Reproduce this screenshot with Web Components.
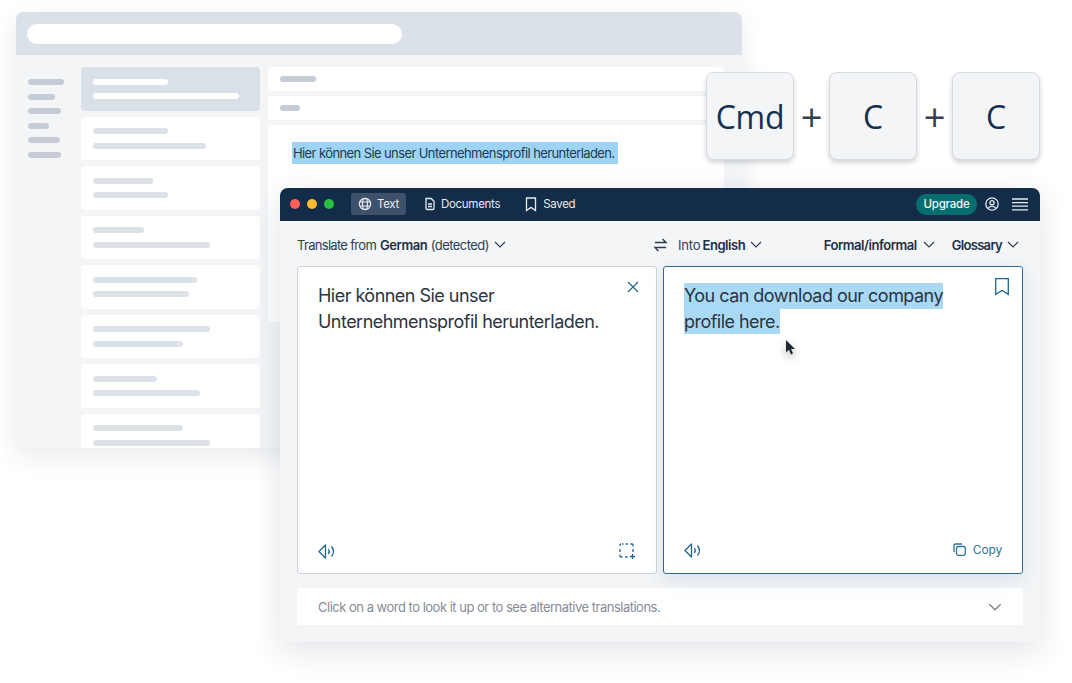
<!DOCTYPE html>
<html lang="en">
<head>
<meta charset="utf-8">
<title>Translator</title>
<style>
    html, body { margin: 0; background: #fff; }
    body { font-family: Inter, "Liberation Sans", sans-serif; overflow: hidden; }
</style>
</head>
<body>
<app-stage>
    <back-window></back-window>
    <translator-window></translator-window>
    <key-combo></key-combo>
</app-stage>

<script>
const ICONS = {
    globe: '<circle cx="7" cy="7" r="5.6"/><ellipse cx="7" cy="7" rx="2.5" ry="5.6"/><path d="M1.6 5h10.8M1.6 9h10.8"/>',
    doc: '<path d="M3 1.5h5.2L11 4.3v7a1.2 1.2 0 0 1-1.2 1.2H4.2A1.2 1.2 0 0 1 3 11.3z"/><path d="M5 7h4M5 9.5h4"/>',
    bookmark: '<path d="M2.5 1h9v12.5L7 10.4l-4.5 3.1z"/>',
    bookmarkLg: '<path d="M.7.7h12.6v15.6L7 12.5.7 16.3z"/>',
    user: '<circle cx="7" cy="7" r="6.2"/><circle cx="7" cy="5.8" r="2.1"/><path d="M3.2 11.4c.9-1.5 2.2-2.3 3.8-2.3s2.9.8 3.8 2.3"/>',
    menu: '<path d="M0 1h16M0 4.6h16M0 8.2h16M0 11.8h16"/>',
    chevron: '<path d="M1 1l5 5 5-5"/>',
    swap: '<path d="M1 4.5h11L8.6 1M12 9.5H1l3.4 3.5"/>',
    close: '<path d="M1 1l10 10M11 1L1 11"/>',
    speaker: '<path d="M1 7.5L7.5 1v13z" stroke-linejoin="round"/><path d="M10.5 5c1 1.6 1 3.4 0 5M13.5 2.5c2.4 3 2.4 7 0 10"/>',
    select: '<path d="M3 1h1.5M7 1h2M11.5 1H13a1 1 0 0 1 1 1v1.5M14 6v3M1 3V2a1 1 0 0 1 1-1M1 6v3M1 11.5V13a1 1 0 0 0 1 1h1.5M6 14h2.5" /><path d="M13.5 11v5M11 13.5h5"/>',
    copy: '<rect x="3.5" y="3.5" width="8.8" height="8.8" rx="1.8"/><path d="M1 9V2.4A1.4 1.4 0 0 1 2.4 1H9"/>'
};

// small svg icon, stroke colour comes from css color
class UiIcon extends HTMLElement {
    connectedCallback() {
        const box = this.getAttribute('box') || '0 0 14 14';
        const [, , vw, vh] = box.split(' ');
        const w = this.getAttribute('w') || vw;
        const h = this.getAttribute('h') || vh;
        const sw = this.getAttribute('sw') || '1.2';
        this.attachShadow({ mode: 'open' }).innerHTML = `
        <style>
            :host { display: block; width: ${w}px; height: ${h}px; flex: none; }
            svg { display: block; overflow: visible; }
        </style>
        <svg width="${w}" height="${h}" viewBox="${box}" fill="none" stroke="currentColor" stroke-width="${sw}">${ICONS[this.getAttribute('name')]}</svg>`;
    }
}
customElements.define('ui-icon', UiIcon);

class AppStage extends HTMLElement {
    constructor() {
        super();
        this.attachShadow({ mode: 'open' }).innerHTML = `
        <style>
            :host { display: block; position: relative; width: 1072px; height: 683px; background: #fff; overflow: hidden; }
        </style>
        <slot></slot>`;
    }
}
customElements.define('app-stage', AppStage);

class SkeletonLine extends HTMLElement {
    constructor() {
        super();
        this.attachShadow({ mode: 'open' }).innerHTML = `
        <style>
            :host { display: block; height: 6px; border-radius: 3px; background: var(--line, #dde1e8); }
        </style>`;
    }
    connectedCallback() {
        this.style.width = this.getAttribute('w') + 'px';
    }
}
customElements.define('skeleton-line', SkeletonLine);

class ListCard extends HTMLElement {
    connectedCallback() {
        this.attachShadow({ mode: 'open' }).innerHTML = `
        <style>
            :host { display: flex; flex-direction: column; gap: 8.5px; flex: none; box-sizing: border-box; height: 43.5px;
                    padding: 11.5px 12px; border-radius: 4px; background: #fff; }
            :host([selected]) { background: #dae0e8; --line: #fff; }
        </style>
        <skeleton-line w="${this.getAttribute('a')}"></skeleton-line>
        <skeleton-line w="${this.getAttribute('b')}"></skeleton-line>`;
    }
}
customElements.define('list-card', ListCard);

class BackWindow extends HTMLElement {
    constructor() {
        super();
        const cards = [[75, 146], [75, 113], [60, 75], [50.6, 117], [104, 95.6], [117, 90], [63.6, 107], [90, 117]];
        this.attachShadow({ mode: 'open' }).innerHTML = `
        <style>
            :host { display: flex; flex-direction: column; position: absolute; left: 16px; top: 12px; width: 726px; height: 436px;
                    border-radius: 8px 8px 0 8px; overflow: hidden; background: #f3f5f7; box-shadow: 0 8px 24px rgba(30,50,80,.10); }
            header { flex: none; height: 43px; box-sizing: border-box; padding: 11.5px 11px; background: #dae1e8; }
            .search { width: 375px; height: 20.5px; border-radius: 10px; background: #fff; }
            .body { flex: 1; min-height: 0; display: flex; padding-top: 12px; }
            nav { flex: none; width: 65px; box-sizing: border-box; padding: 12px 0 0 12px; display: flex; flex-direction: column; gap: 8.6px; --line: #c5ccd5; }
            .list { flex: none; width: 179px; display: flex; flex-direction: column; gap: 6px; }
            .content { flex: none; width: 456px; margin-left: 8px; display: flex; flex-direction: column; gap: 5.5px; }
            .bar { height: 23.5px; box-sizing: border-box; padding: 9px 12px; border-radius: 4px; background: #fff; --line: #c5ccd5; }
            .doc { height: 197px; box-sizing: border-box; padding: 17px 24px; border-radius: 4px; background: #fff; }
            mark { display: inline-block; height: 22px; padding: 0 3px 0 1px; background: #9dd4f5; color: #24394f;
                   font: 13px/22px Inter, "Liberation Sans", sans-serif; letter-spacing: -.6px; white-space: nowrap; }
        </style>
        <header><div class="search"></div></header>
        <div class="body">
            <nav>
                <skeleton-line w="36"></skeleton-line><skeleton-line w="27"></skeleton-line>
                <skeleton-line w="33"></skeleton-line><skeleton-line w="21"></skeleton-line>
                <skeleton-line w="32"></skeleton-line><skeleton-line w="33"></skeleton-line>
            </nav>
            <div class="list">
                ${cards.map((c, i) => `<list-card a="${c[0]}" b="${c[1]}"${i === 0 ? ' selected' : ''}></list-card>`).join('')}
            </div>
            <div class="content">
                <div class="bar"><skeleton-line w="36"></skeleton-line></div>
                <div class="bar"><skeleton-line w="20"></skeleton-line></div>
                <div class="doc"><mark>Hier können Sie unser Unternehmensprofil herunterladen.</mark></div>
            </div>
        </div>`;
    }
}
customElements.define('back-window', BackWindow);

class TitleBar extends HTMLElement {
    constructor() {
        super();
        this.attachShadow({ mode: 'open' }).innerHTML = `
        <style>
            :host { display: flex; align-items: center; flex: none; height: 32.5px; box-sizing: border-box; padding: 0 12px 0 10px;
                    background: #122c4a; color: #e6ebf0; font-size: 11.5px; letter-spacing: -.3px; }
            .dots { display: flex; gap: 7px; margin-right: 17px; }
            .dots i { display: block; width: 10px; height: 10px; border-radius: 50%; }
            .tab { display: flex; align-items: center; gap: 5px; height: 22px; box-sizing: border-box; padding: 0 8px; border-radius: 3px; }
            .tab.on { background: #3e516a; width: 55px; padding: 0 7px; }
            .docs { margin-left: 9px; gap: 4px; }
            .saved { margin-left: 8px; }
            .upgrade { margin-left: auto; width: 61px; height: 21px; border-radius: 10px; background: #066e6f; color: #eef6f5;
                       font-weight: 500; letter-spacing: -.2px; display: flex; align-items: center; justify-content: center; }
            .user { margin: 0 13px 0 8px; }
        </style>
        <div class="dots"><i style="background:#ff5f57"></i><i style="background:#febb2e"></i><i style="background:#29c13f"></i></div>
        <div class="tab on"><ui-icon name="globe"></ui-icon>Text</div>
        <div class="tab docs"><ui-icon name="doc" sw="1.3"></ui-icon>Documents</div>
        <div class="tab saved"><ui-icon name="bookmark" sw="1.3"></ui-icon>Saved</div>
        <div class="upgrade">Upgrade</div>
        <ui-icon class="user" name="user" box="0 0 14 14" sw="1.3"></ui-icon>
        <ui-icon name="menu" box="0 0 16 13" sw="1.3"></ui-icon>`;
    }
}
customElements.define('title-bar', TitleBar);

class LangBar extends HTMLElement {
    constructor() {
        super();
        this.attachShadow({ mode: 'open' }).innerHTML = `
        <style>
            :host { display: flex; align-items: center; height: 45.5px; padding-top: 2.5px; box-sizing: border-box; flex: none; color: #2c3e52; font-size: 13px; letter-spacing: -.55px; white-space: nowrap; }
            b { font-weight: 600; color: #1c2f45; letter-spacing: -.45px; }
            .group { display: flex; align-items: center; }
            ui-icon { margin-left: 5px; color: #2c3e52; }
            .swap { margin: 0 11px 0 0; }
            .left { width: 357px; }
            .right { margin-left: auto; }
            .from { margin-right: 4px; letter-spacing: -.7px; }
            .det { margin-left: 3.5px; }
            .into { margin-right: 2px; letter-spacing: -.15px; }
            .gloss { letter-spacing: -.7px; }
        </style>
        <div class="group left"><span class="from">Translate from</span><b>German</b><span class="det">(detected)</span><ui-icon name="chevron" box="0 0 12 7"></ui-icon></div>
        <ui-icon class="swap" name="swap" box="0 0 13 14" w="13" h="14" sw="1.4"></ui-icon>
        <div class="group"><span class="into">Into</span><b>English</b><ui-icon name="chevron" box="0 0 12 7"></ui-icon></div>
        <div class="group right" style="margin-right:17px"><b>Formal/informal</b><ui-icon name="chevron" box="0 0 12 7" style="margin-left:6px"></ui-icon></div>
        <div class="group" style="margin-right:4px"><b class="gloss">Glossary</b><ui-icon name="chevron" box="0 0 12 7"></ui-icon></div>`;
    }
}
customElements.define('lang-bar', LangBar);

class TextPanel extends HTMLElement {
    constructor() {
        super();
        this.attachShadow({ mode: 'open' }).innerHTML = `
        <style>
            :host { display: flex; flex-direction: column; box-sizing: border-box; position: relative; height: 308px; min-width: 0; padding: 16px 20px 14px 20px;
                    background: #fff; border: 1px solid #cdd3da; border-radius: 3px; color: #2b3441; }
            :host([active]) { border-color: #2c6c92; box-shadow: 0 6px 18px rgba(40,100,160,.12); }
            .text { flex: 1; font-size: 18px; line-height: 25.5px; letter-spacing: -.53px; }
            .foot { display: flex; align-items: center; justify-content: space-between; color: #1f668c; }
            .corner { position: absolute; top: 11px; right: 13px; color: #1f668c; }
        </style>
        <div class="text"><slot></slot></div>
        <div class="corner"><slot name="corner"></slot></div>
        <div class="foot"><ui-icon name="speaker" box="0 0 18 15" w="18" h="15" sw="1.3"></ui-icon><slot name="action"></slot></div>`;
    }
}
customElements.define('text-panel', TextPanel);

class SelectedLine extends HTMLElement {
    constructor() {
        super();
        this.attachShadow({ mode: 'open' }).innerHTML = `
        <style>
            :host { display: block; width: fit-content; background: #a9d9f5; white-space: nowrap; }
        </style><slot></slot>`;
    }
}
customElements.define('selected-line', SelectedLine);

class TranslatorWindow extends HTMLElement {
    constructor() {
        super();
        this.attachShadow({ mode: 'open' }).innerHTML = `
        <style>
            :host { display: flex; flex-direction: column; position: absolute; left: 280px; top: 188px; width: 760px; height: 454px;
                    border-radius: 8px; overflow: visible; background: #f3f5f7; box-shadow: 0 8px 30px rgba(30,50,80,.14); }
            title-bar { border-radius: 8px 8px 0 0; }
            .inner { flex: 1; display: flex; flex-direction: column; padding: 0 17px; }
            .panels { display: grid; grid-template-columns: 360px 360px; gap: 6px; }
            .hint { display: flex; align-items: center; justify-content: space-between; height: 37px; box-sizing: border-box; margin-top: 14px; padding: 0 21px;
                    background: #fff; border-radius: 3px; color: #878d96; font-size: 13px; letter-spacing: -.5px; }
            .copy { display: flex; align-items: center; gap: 7px; margin-bottom: 2px; font-size: 12px; letter-spacing: -.15px; color: #2f7396; }
            .cursor { position: absolute; left: 505px; top: 152px; filter: drop-shadow(0 4px 4px rgba(0,0,0,.35)); }
        </style>
        <title-bar></title-bar>
        <div class="inner">
            <lang-bar></lang-bar>
            <div class="panels">
                <text-panel>
                    Hier können Sie unser<br>Unternehmensprofil herunterladen.
                    <ui-icon slot="corner" name="close" box="0 0 12 12" style="margin:3px 4px 0 0"></ui-icon>
                    <ui-icon slot="action" name="select" box="0 0 17 16" w="17" h="16" sw="1.3"></ui-icon>
                </text-panel>
                <text-panel active>
                    <selected-line>You can download our company</selected-line>
                    <selected-line>profile here.</selected-line>
                    <ui-icon slot="corner" name="bookmarkLg" box="0 0 14 17" w="14" h="17" sw="1.3"></ui-icon>
                    <span slot="action" class="copy"><ui-icon name="copy" box="0 0 13 13" sw="1.3"></ui-icon>Copy</span>
                </text-panel>
            </div>
            <div class="hint">Click on a word to look it up or to see alternative translations.
                <ui-icon name="chevron" box="0 0 12 7" w="14" h="8" style="color:#7f858d"></ui-icon>
            </div>
        </div>
        <svg class="cursor" width="10" height="15" viewBox="0 0 10 15"><path d="M1 0v12.5l3-2.7 2 4.7 2-.9-2-4.6h4z" fill="#1d2733"/></svg>`;
    }
}
customElements.define('translator-window', TranslatorWindow);

class KeyCap extends HTMLElement {
    constructor() {
        super();
        this.attachShadow({ mode: 'open' }).innerHTML = `
        <style>
            :host { display: flex; align-items: center; justify-content: center; width: 88px; height: 88px; box-sizing: border-box; flex: none;
                    background: #f3f5f7; border: 1px solid #d6dae0; border-radius: 8px; box-shadow: 0 3px 5px rgba(20,30,50,.18); }
        </style><slot></slot>`;
    }
}
customElements.define('key-cap', KeyCap);

class KeyCombo extends HTMLElement {
    constructor() {
        super();
        this.attachShadow({ mode: 'open' }).innerHTML = `
        <style>
            :host { display: flex; align-items: center; justify-content: space-between; position: absolute; left: 706px; top: 72px; width: 334px;
                    font: 32px "Open Sans", "Noto Sans", sans-serif; letter-spacing: -.3px; color: #15304e; }
            span { color: #33404f; font-size: 38px; line-height: 1; }
        </style>
        <key-cap>Cmd</key-cap><span>+</span><key-cap>C</key-cap><span>+</span><key-cap>C</key-cap>`;
    }
}
customElements.define('key-combo', KeyCombo);
</script>
</body>
</html>
